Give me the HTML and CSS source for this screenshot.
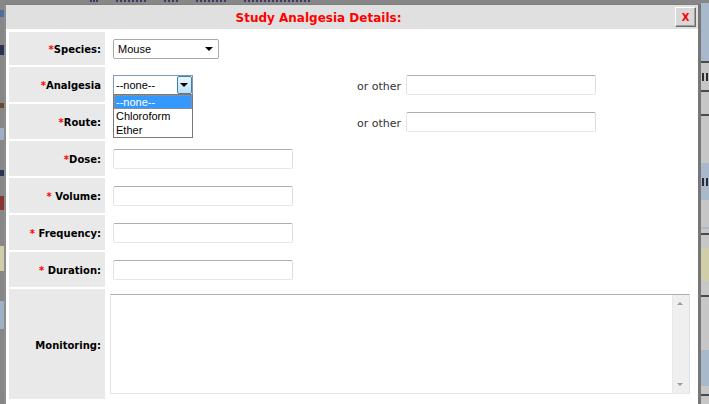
FILE: index.html
```html
<!DOCTYPE html>
<html>

<head>
    <link rel="stylesheet" href="styles.css">
</head>

<body>
    <div class="page">
        <div class="page-left">
            <div class="pb gray" style="height:10px"></div>
            <div class="pb blue" style="height:7px"></div>
            <div class="pb gray" style="height:28px"></div>
            <div class="pb navy" style="height:10px"></div>
            <div class="pb gray" style="height:48px"></div>
            <div class="pb brown" style="height:5px"></div>
            <div class="pb gray" style="height:20px"></div>
            <div class="pb light" style="height:12px"></div>
            <div class="pb gray" style="height:30px"></div>
            <div class="pb navy" style="height:6px"></div>
            <div class="pb gray" style="height:20px"></div>
            <div class="pb red" style="height:14px"></div>
            <div class="pb gray" style="height:36px"></div>
            <div class="pb khaki" style="height:25px"></div>
            <div class="pb gray" style="height:30px"></div>
            <div class="pb light" style="height:28px"></div>
            <div class="pb gray" style="height:60px"></div>
        </div>
        <div class="page-mid">
            <div class="page-top">
                <span class="dash" style="width:8px"></span>
                <span class="dash" style="width:30px"></span>
                <span class="dash" style="width:14px"></span>
                <span class="dash" style="width:30px"></span>
                <span class="dash" style="width:66px"></span>
            </div>
        </div>
        <div class="page-right">
            <div class="pb gray" style="height:3px"></div>
            <div class="pb sky" style="height:58px"></div>
            <div class="pb line" style="height:2px"></div>
            <div class="pb silver" style="height:27px"><span class="mark"></span></div>
            <div class="pb line" style="height:2px"></div>
            <div class="pb silver" style="height:22px"></div>
            <div class="pb line" style="height:2px"></div>
            <div class="pb silver" style="height:47px"></div>
            <div class="pb sky" style="height:37px"><span class="mark"></span></div>
            <div class="pb silver" style="height:27px"></div>
            <div class="pb sky" style="height:2px"></div>
            <div class="pb silver" style="height:4px"></div>
            <div class="pb line" style="height:2px"></div>
            <div class="pb silver" style="height:13px"></div>
            <div class="pb khaki" style="height:33px"></div>
            <div class="pb silver" style="height:14px"></div>
            <div class="pb line" style="height:2px"></div>
            <div class="pb silver" style="height:53px"></div>
            <div class="pb sky" style="height:36px"></div>
            <div class="pb silver" style="height:8px"></div>
            <div class="pb line" style="height:2px"></div>
            <div class="pb silver" style="height:10px"></div>
        </div>
    </div>

    <div class="dialog">
        <div class="titlebar">
            <div class="title">Study Analgesia Details:</div>
            <div class="close">X</div>
        </div>

        <div class="form">
            <div class="label"><span class="req">*</span>Species:</div>
            <div class="value">
                <div class="select species">Mouse<span class="caret"></span></div>
            </div>

            <div class="label"><span class="req">*</span>Analgesia</div>
            <div class="value">
                <div class="select active">--none--
                    <span class="drop-btn"><span class="caret"></span></span>
                    <div class="droplist">
                        <div class="opt selected">--none--</div>
                        <div class="opt">Chloroform</div>
                        <div class="opt">Ether</div>
                    </div>
                </div>
                <span class="other">or other</span>
                <input type="text" class="field wide">
            </div>

            <div class="label"><span class="req">*</span>Route:</div>
            <div class="value">
                <div class="select small">&nbsp;<span class="caret"></span></div>
                <span class="other">or other</span>
                <input type="text" class="field wide">
            </div>

            <div class="label"><span class="req">*</span>Dose:</div>
            <div class="value"><input type="text" class="field"></div>

            <div class="label"><span class="req">*</span> Volume:</div>
            <div class="value"><input type="text" class="field"></div>

            <div class="label"><span class="req">*</span> Frequency:</div>
            <div class="value"><input type="text" class="field"></div>

            <div class="label"><span class="req">*</span> Duration:</div>
            <div class="value"><input type="text" class="field"></div>

            <div class="label">Monitoring:</div>
            <div class="value">
                <div class="textarea">
                    <div class="ta-body"></div>
                    <div class="scrollbar">
                        <span class="arrow up"></span>
                        <span class="arrow down"></span>
                    </div>
                </div>
            </div>
        </div>
    </div>
</body>

</html>
```

FILE: styles.css
```css
body {
    margin: 0;
    padding: 0;
    background-color: #868686;
    font-family: "DejaVu Sans", Verdana, sans-serif;
    overflow: hidden;
}

/* page behind the dialog */
.page {
    display: flex;
    height: 404px;
}

.page-left {
    width: 4px;
    display: flex;
    flex-direction: column;
}

.page-mid {
    flex: 1;
}

.page-right {
    width: 8px;
    display: flex;
    flex-direction: column;
}

.page-top {
    height: 4px;
    display: flex;
    gap: 18px;
    padding-left: 86px;
}

.dash {
    height: 2px;
    border-bottom: 2px dotted #3e3a66;
    box-sizing: border-box;
}

.pb {
    flex-shrink: 0;
    display: flex;
    align-items: center;
}

.pb.gray { background-color: #878787; }
.pb.blue { background-color: #4f6d9a; }
.pb.navy { background-color: #2a3350; }
.pb.brown { background-color: #6b4a2a; }
.pb.red { background-color: #8b3434; }
.pb.light { background-color: #9fb0c4; }
.pb.khaki { background-color: #cfcea8; }
.pb.sky { background-color: #a9b9cc; }
.pb.silver { background-color: #c6c6c6; }
.pb.line { background-color: #4a4a4a; }

.mark {
    width: 6px;
    height: 8px;
    margin-left: 1px;
    border-left: 2px solid #2c2c2c;
    border-right: 2px solid #2c2c2c;
    box-sizing: border-box;
}

/* dialog */
.dialog {
    position: absolute;
    left: 4px;
    top: 4px;
    width: 692px;
    height: 399px;
    background-color: #fff;
    border-left: 2px solid #8e8e8e;
    border-right: 3px solid #777;
    border-top: 1px solid #808080;
}

.titlebar {
    height: 24px;
    background-color: #e0e0e0;
    display: flex;
    align-items: center;
}

.title {
    width: 625px;
    padding-top: 1px;
    text-align: center;
    font-weight: bold;
    font-size: 12px;
    color: #ff0000;
}

.close {
    margin-left: auto;
    margin-right: 2px;
    width: 21px;
    height: 20px;
    box-sizing: border-box;
    background-color: #d8d8d8;
    border: 1px solid;
    border-color: #fff #6a6a6a #6a6a6a #fff;
    box-shadow: inset -1px -1px 0 #a0a0a0;
    color: #ff0000;
    font-weight: bold;
    font-size: 10px;
    display: flex;
    align-items: center;
    justify-content: center;
}

.form {
    display: grid;
    grid-template-columns: 96px 1fr;
    grid-template-rows: 33px repeat(6, 35px) 110px;
    gap: 2px;
    padding: 3px 2px 0 3px;
}

.label {
    background-color: #e9e9e9;
    display: flex;
    align-items: center;
    justify-content: flex-end;
    padding: 2px 4px 0 0;
    font-weight: bold;
    font-size: 10px;
    color: #000;
    white-space: pre;
}

.req {
    color: #ff0000;
}

.value {
    display: flex;
    align-items: center;
    padding-left: 6px;
    font-size: 11px;
    color: #333;
}

/* fake selects */
.select {
    position: relative;
    box-sizing: border-box;
    height: 20px;
    width: 80px;
    border: 1px solid #a9a9a9;
    border-radius: 2px;
    background-color: #fff;
    font: 11px "Liberation Sans", Arial, sans-serif;
    color: #000;
    padding-left: 2px;
    display: flex;
    align-items: center;
}

.select.species {
    width: 106px;
    padding-left: 4px;
}

.caret {
    position: absolute;
    right: 5px;
    top: 7px;
    width: 0;
    height: 0;
    border-left: 4px solid transparent;
    border-right: 4px solid transparent;
    border-top: 4px solid #000;
}

.select.active {
    border-color: #7a9bbd;
    border-radius: 0;
}

.drop-btn {
    position: absolute;
    right: 0;
    top: 0;
    width: 15px;
    height: 18px;
    box-sizing: border-box;
    border: 1px solid #3c7fb1;
    border-radius: 2px;
    background: linear-gradient(#eaf6fd, #bfe0f5);
}

.drop-btn .caret {
    right: 3px;
    top: 6px;
}

.droplist {
    position: absolute;
    left: -1px;
    top: 18px;
    width: 80px;
    box-sizing: border-box;
    border: 1px solid #7a7a7a;
    background-color: #fff;
    z-index: 2;
}

.opt {
    height: 14px;
    line-height: 14px;
    padding-left: 2px;
    box-sizing: border-box;
}

.opt.selected {
    background-color: #3399ff;
    color: #fff;
    border: 1px dotted #d08a3a;
    line-height: 12px;
    padding-left: 1px;
}

.other {
    margin-left: 164px;
    margin-right: 5px;
    padding-top: 3px;
}

/* win7 style text boxes */
.field {
    box-sizing: border-box;
    width: 180px;
    height: 20px;
    margin: 0;
    padding: 0 3px;
    border: 1px solid;
    border-color: #abadb3 #dbdfe6 #e3e9ef #e2e3ea;
    border-radius: 2px;
    background-color: #fff;
    outline: none;
}

.field.wide {
    width: 190px;
}

.textarea {
    margin-left: -3px;
    width: 580px;
    height: 100px;
    box-sizing: border-box;
    border: 1px solid;
    border-color: #abadb3 #dbdfe6 #e3e9ef #e2e3ea;
    display: flex;
}

.ta-body {
    flex: 1;
}

.scrollbar {
    width: 16px;
    background-color: #efefef;
    border-left: 1px solid #e8e8e8;
    position: relative;
}

.arrow {
    position: absolute;
    left: 4px;
    width: 0;
    height: 0;
    border-left: 3px solid transparent;
    border-right: 3px solid transparent;
}

.arrow.up {
    top: 7px;
    border-bottom: 3px solid #9a9a9a;
}

.arrow.down {
    bottom: 7px;
    border-top: 3px solid #9a9a9a;
}
```
